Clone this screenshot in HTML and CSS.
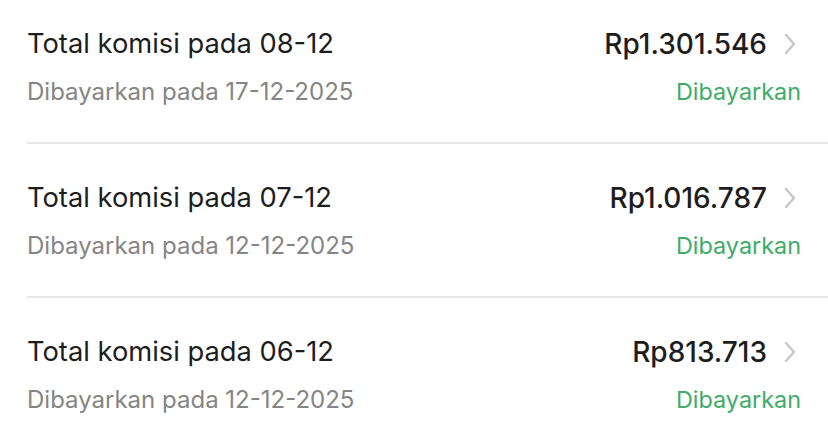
FILE: index.html
```html
<!DOCTYPE html>
<html lang="id">
<head>
  <meta charset="UTF-8">
  <meta name="viewport" content="width=device-width, initial-scale=1.0">
  <title>Riwayat Komisi</title>
  <link rel="stylesheet" href="styles.css">
</head>
<body>

<ul class="commission-list">
  <li class="commission-item">
    <div class="row">
      <span class="title">Total komisi pada 08-12</span>
      <span class="amount">Rp1.301.546
        <svg class="chevron" viewBox="0 0 12 22"><path d="M2 2 L10 11 L2 20"/></svg>
      </span>
    </div>
    <div class="row">
      <span class="paid-date">Dibayarkan pada 17-12-2025</span>
      <span class="status">Dibayarkan</span>
    </div>
  </li>
  <li class="commission-item">
    <div class="row">
      <span class="title">Total komisi pada 07-12</span>
      <span class="amount">Rp1.016.787
        <svg class="chevron" viewBox="0 0 12 22"><path d="M2 2 L10 11 L2 20"/></svg>
      </span>
    </div>
    <div class="row">
      <span class="paid-date">Dibayarkan pada 12-12-2025</span>
      <span class="status">Dibayarkan</span>
    </div>
  </li>
  <li class="commission-item">
    <div class="row">
      <span class="title">Total komisi pada 06-12</span>
      <span class="amount">Rp813.713
        <svg class="chevron" viewBox="0 0 12 22"><path d="M2 2 L10 11 L2 20"/></svg>
      </span>
    </div>
    <div class="row">
      <span class="paid-date">Dibayarkan pada 12-12-2025</span>
      <span class="status">Dibayarkan</span>
    </div>
  </li>
</ul>

</body>
</html>
```

FILE: styles.css
```css
body {
  margin: 0;
  font-family: Inter, "Noto Sans", sans-serif;
  background-color: #fff;
}
.commission-list {
  list-style: none;
  margin: 0;
  padding: 0;
}
.commission-item {
  margin-left: 27px;
  padding: 36px 27px 35px 0;
  border-bottom: 2px solid #e8e8e8;
}
.commission-item:first-child {
  padding-top: 26px;
}
.commission-item:last-child {
  border-bottom: none;
}
.row {
  display: flex;
  justify-content: space-between;
  align-items: center;
}
.row + .row {
  margin-top: 15px;
}
.title {
  font-size: 27.3px;
  line-height: 36px;
  color: #1d1d1d;
}
.amount {
  display: flex;
  align-items: center;
  font-size: 28px;
  line-height: 36px;
  font-weight: 500;
  color: #1d1d1d;
}
.chevron {
  width: 12px;
  height: 22px;
  margin-left: 17px;
  margin-right: 5px;
  fill: none;
  stroke: #c6c6c6;
  stroke-width: 2.4;
  stroke-linecap: round;
  stroke-linejoin: round;
}
.paid-date {
  font-size: 24px;
  line-height: 30px;
  color: #858585;
}
.status {
  font-size: 23.4px;
  line-height: 30px;
  color: #3dac68;
}
```
